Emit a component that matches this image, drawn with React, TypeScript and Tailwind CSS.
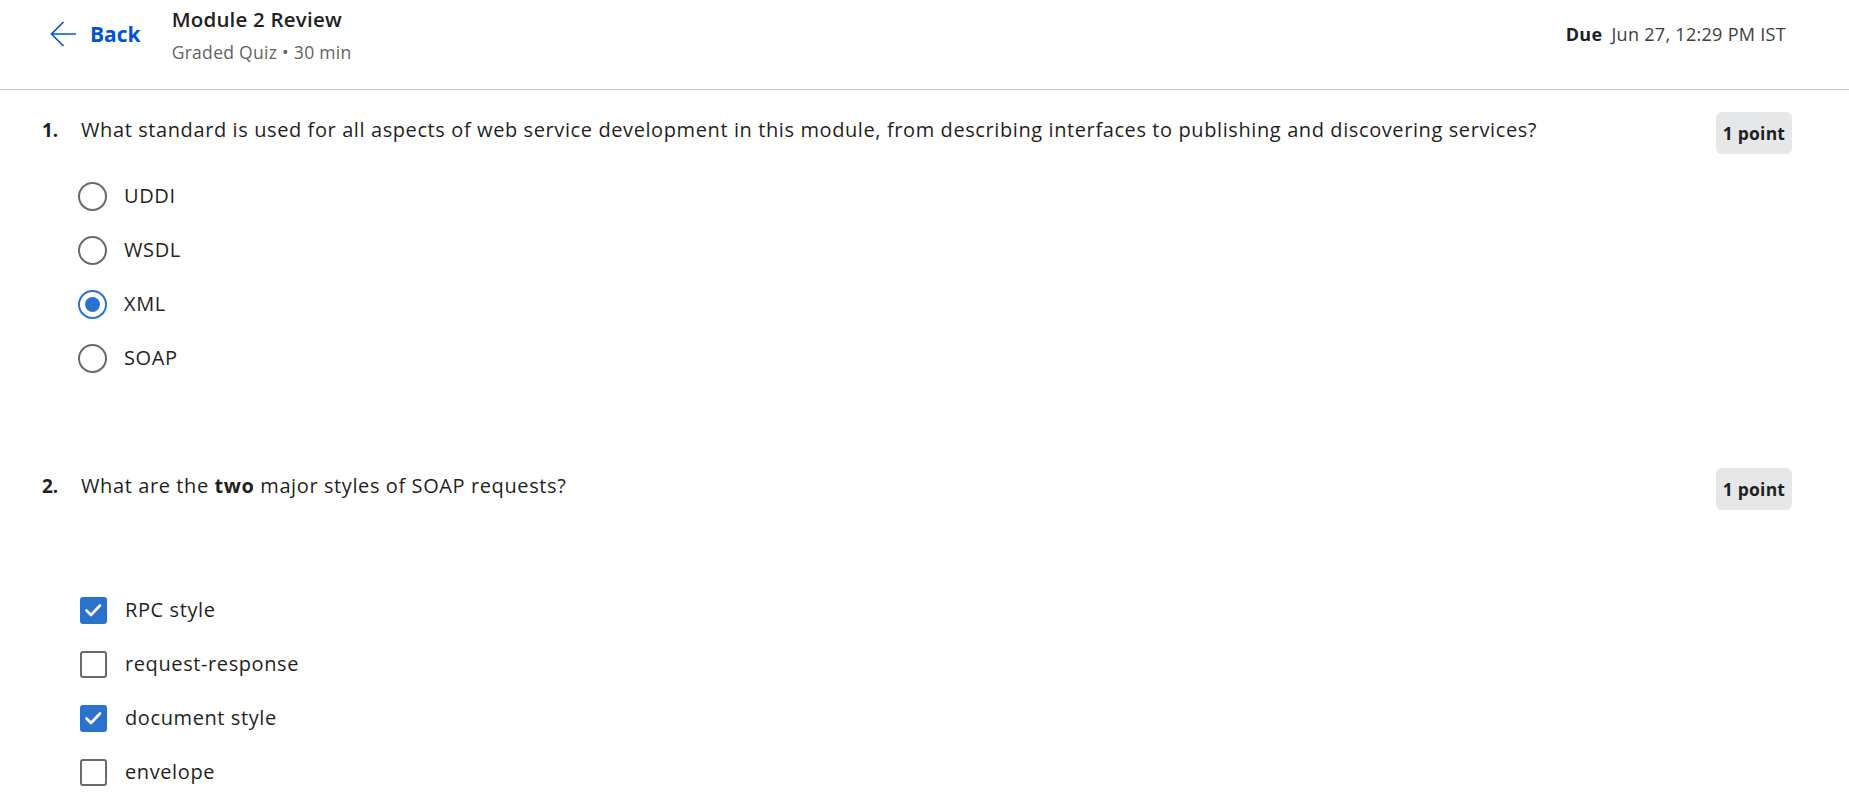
import React from "react";

type Choice = { label: string; checked?: boolean };

const radioChoices: Choice[] = [
  { label: "UDDI" },
  { label: "WSDL" },
  { label: "XML", checked: true },
  { label: "SOAP" },
];

const checkChoices: Choice[] = [
  { label: "RPC style", checked: true },
  { label: "request-response" },
  { label: "document style", checked: true },
  { label: "envelope" },
];

function Radio({ checked }: { checked?: boolean }) {
  if (checked) {
    return (
      <span className="flex h-[29px] w-[29px] items-center justify-center rounded-full border-[2.5px] border-[#2a73cc]">
        <span className="h-[15px] w-[15px] rounded-full bg-[#2a73cc]" />
      </span>
    );
  }
  return <span className="h-[29px] w-[29px] rounded-full border-[2.5px] border-[#6a6a6a]" />;
}

function Checkbox({ checked }: { checked?: boolean }) {
  if (checked) {
    return (
      <span className="flex h-[27px] w-[27px] items-center justify-center rounded-[3px] bg-[#2a73cc]">
        <svg width="27" height="27" viewBox="0 0 27 27" fill="none">
          <path d="M6.5 13.5l4.5 4.5 9-9.5" stroke="white" strokeWidth="2.6" strokeLinecap="round" strokeLinejoin="round" />
        </svg>
      </span>
    );
  }
  return <span className="h-[27px] w-[27px] rounded-[3px] border-[2.5px] border-[#6a6a6a]" />;
}

function QuestionRow({ num, children }: { num: string; children: React.ReactNode }) {
  return (
    <div className="flex h-[28px] items-start">
      <span className="w-[39px] text-[19px] font-bold leading-[28px]">{num}</span>
      <p className="flex-1 text-[20px] leading-[28px] tracking-[0.6px]">{children}</p>
      <span className="-mt-[4px] flex h-[42px] w-[76px] items-center justify-center rounded-[6px] bg-[#e6e7e8] text-[17.5px] font-bold tracking-[0.2px] text-[#1f1f1f]">
        1 point
      </span>
    </div>
  );
}

export default function App() {
  return (
    <div className="min-h-[796px] bg-white font-['Open_Sans',sans-serif] text-[#1f1f1f]">
      <header className="flex h-[90px] items-start border-b border-[#c8c8c8] pr-[63px]">
        <button className="mt-[21px] ml-[50px] flex h-[26px] items-center gap-[14px] text-[#0056d2]">
          <svg width="26" height="26" viewBox="0 0 26 26" fill="none">
            <path d="M1.5 13H26M13.5 1L1.5 13l12 12" stroke="currentColor" strokeWidth="1.6" />
          </svg>
          <span className="text-[21px] font-bold leading-[26px]">Back</span>
        </button>
        <div className="ml-[31px] mt-[5px] flex flex-col">
          <span className="text-[20.5px] font-semibold leading-[28px] tracking-[0.2px]">Module 2 Review</span>
          <span className="mt-[7px] text-[17.5px] leading-[24px] tracking-[0.3px] text-[#636363]">Graded Quiz • 30 min</span>
        </div>
        <div className="ml-auto mt-[22px] text-[18px] leading-[24px] tracking-[0.3px]">
          <span className="font-bold">Due</span>
          <span className="ml-[9px] text-[#3d3d3d]">Jun 27, 12:29 PM IST</span>
        </div>
      </header>

      <main className="pl-[42px] pr-[57px]">
        <section className="pt-[26px]">
          <QuestionRow num="1.">
            What standard is used for all aspects of web service development in this module, from describing interfaces to publishing and discovering services?
          </QuestionRow>
          <div className="mt-[25px] ml-[36px] flex flex-col">
            {radioChoices.map((c) => (
              <label key={c.label} className="flex h-[54px] items-center gap-[17px]">
                <Radio checked={c.checked} />
                <span className="text-[20px] tracking-[0.6px]">{c.label}</span>
              </label>
            ))}
          </div>
        </section>

        <section className="pt-[87px]">
          <QuestionRow num="2.">
            What are the <b>two</b> major styles of SOAP requests?
          </QuestionRow>
          <div className="mt-[83px] ml-[38px] flex flex-col">
            {checkChoices.map((c) => (
              <label key={c.label} className="flex h-[54px] items-center gap-[18px]">
                <Checkbox checked={c.checked} />
                <span className="text-[20px] tracking-[0.6px]">{c.label}</span>
              </label>
            ))}
          </div>
        </section>
      </main>
    </div>
  );
}
